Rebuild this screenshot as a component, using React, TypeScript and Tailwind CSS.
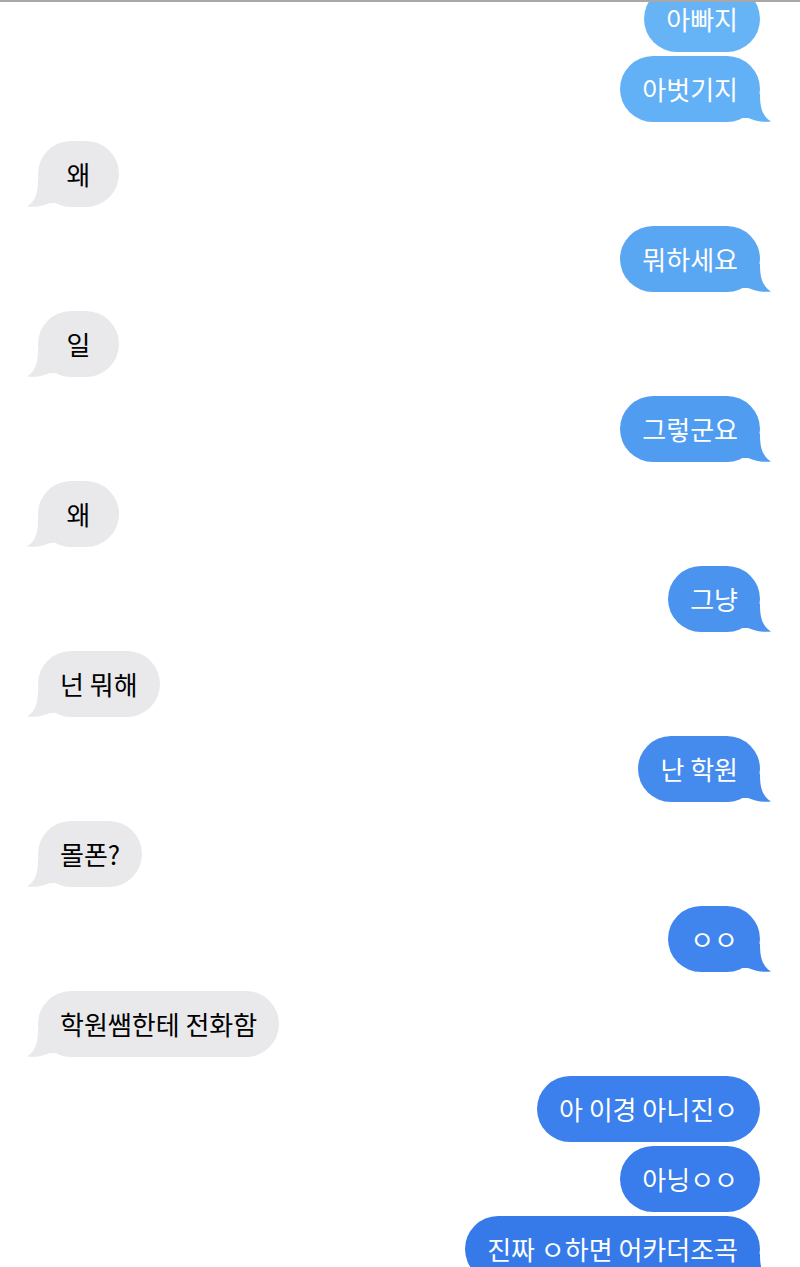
import React from "react";

type Msg = {
  side: "me" | "them";
  text: string;
  bg: string;
  fill: string;
  tail: boolean;
};

const GRAY_BG = "bg-[#e9e9eb]";
const GRAY_FILL = "fill-[#e9e9eb]";

const messages: Msg[] = [
  { side: "me", text: "아빠지", bg: "bg-[#66b4f6]", fill: "fill-[#66b4f6]", tail: false },
  { side: "me", text: "아벗기지", bg: "bg-[#62b0f5]", fill: "fill-[#62b0f5]", tail: true },
  { side: "them", text: "왜", bg: GRAY_BG, fill: GRAY_FILL, tail: true },
  { side: "me", text: "뭐하세요", bg: "bg-[#59a6f3]", fill: "fill-[#59a6f3]", tail: true },
  { side: "them", text: "일", bg: GRAY_BG, fill: GRAY_FILL, tail: true },
  { side: "me", text: "그렇군요", bg: "bg-[#509cf1]", fill: "fill-[#509cf1]", tail: true },
  { side: "them", text: "왜", bg: GRAY_BG, fill: GRAY_FILL, tail: true },
  { side: "me", text: "그냥", bg: "bg-[#4a93ef]", fill: "fill-[#4a93ef]", tail: true },
  { side: "them", text: "넌 뭐해", bg: GRAY_BG, fill: GRAY_FILL, tail: true },
  { side: "me", text: "난 학원", bg: "bg-[#458bee]", fill: "fill-[#458bee]", tail: true },
  { side: "them", text: "몰폰?", bg: GRAY_BG, fill: GRAY_FILL, tail: true },
  { side: "me", text: "ㅇㅇ", bg: "bg-[#4085ed]", fill: "fill-[#4085ed]", tail: true },
  { side: "them", text: "학원쌤한테 전화함", bg: GRAY_BG, fill: GRAY_FILL, tail: true },
  { side: "me", text: "아 이경 아니진ㅇ", bg: "bg-[#3b80ec]", fill: "fill-[#3b80ec]", tail: false },
  { side: "me", text: "아닝ㅇㅇ", bg: "bg-[#387deb]", fill: "fill-[#387deb]", tail: false },
  { side: "me", text: "진짜 ㅇ하면 어카더조곡", bg: "bg-[#367aea]", fill: "fill-[#367aea]", tail: true },
];

const Tail = ({ side, fill }: { side: "me" | "them"; fill: string }) => (
  <svg
    viewBox="0 0 40 28"
    className={`absolute bottom-0 h-[28px] w-[40px] ${side === "me" ? "right-[-12px]" : "left-[-12px] -scale-x-100"}`}
  >
    <path className={fill} d="M8 0 L28 0 C28 13 30 22 39 27.5 C32 28.5 25 27.5 16 24 L8 24 Z" />
  </svg>
);

const Bubble = ({ msg, gap }: { msg: Msg; gap: string }) => {
  const isMe = msg.side === "me";
  return (
    <div className={`flex w-full ${gap} ${isMe ? "justify-end pr-[40px]" : "justify-start pl-[38px]"}`}>
      <div
        className={`relative h-[66px] min-w-[81px] rounded-[33px] px-[22px] text-center text-[26px] leading-[66px] whitespace-pre ${msg.bg} ${isMe ? "text-white" : "text-black"}`}
      >
        {msg.tail && <Tail side={msg.side} fill={msg.fill} />}
        <span className="relative">{msg.text}</span>
      </div>
    </div>
  );
};

export default function App() {
  return (
    <div
      className="h-[1267px] w-[800px] overflow-hidden border-t-2 border-[#a8a8a8] bg-white"
      style={{ fontFamily: '"Noto Sans CJK KR", "Noto Sans", sans-serif' }}
    >
      <div className="-mt-[16px] flex flex-col">
        {messages.map((m, i) => {
          const prev = messages[i - 1];
          const gap = i === 0 ? "" : prev.side === m.side ? "mt-[4px]" : "mt-[19px]";
          return <Bubble key={i} msg={m} gap={gap} />;
        })}
      </div>
    </div>
  );
}
